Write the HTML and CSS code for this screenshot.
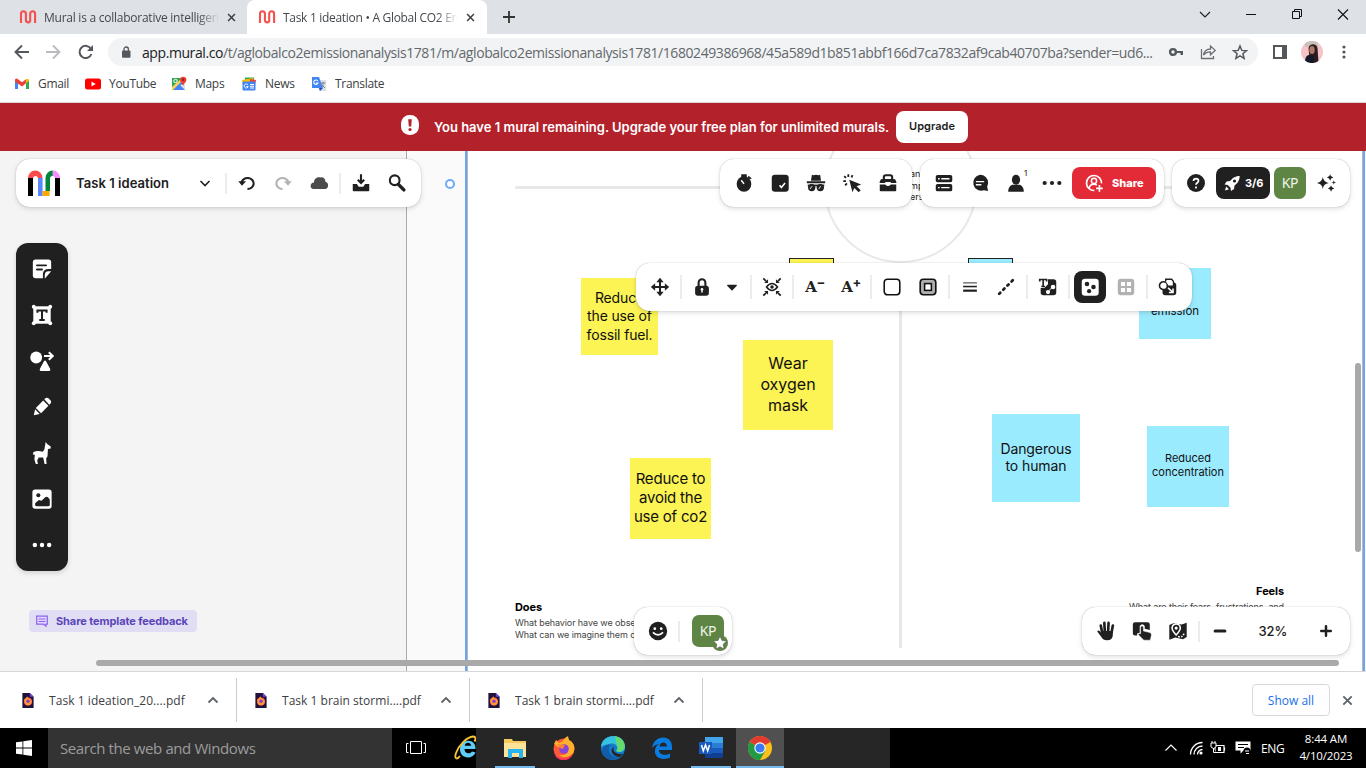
FILE: index.html
```html
<!DOCTYPE html>
<html lang="en">
<head>
<meta charset="utf-8">
<title>Task 1 ideation</title>
<link rel="stylesheet" href="styles.css">
</head>
<body>
<svg class="defs" aria-hidden="true">
  <symbol id="muralfav" viewBox="0 0 18 16"><path d="M2 14V4.800a2.450 2.600 0 0 1 4.900 0V10.500a2.400 2.600 0 0 0 4.500 1.500M11.200 12V4.800a2.450 2.600 0 0 1 4.900 0V14M6.900 4v8" fill="none" stroke="#f4514f" stroke-width="2.100"/></symbol>
  <symbol id="x" viewBox="0 0 10 10"><path d="M1.200 1.200l7.600 7.600M8.800 1.200L1.200 8.800" stroke="currentColor" stroke-width="1.700" fill="none"/></symbol>
  <symbol id="pdf" viewBox="0 0 12 16"><path d="M0 0h8l4 4v12H0z" fill="#20123a"/><path d="M8 0l4 4H8z" fill="#7542e5"/><circle cx="6" cy="9" r="4.300" fill="#ff4f5e"/><path d="M2 6c2 2 1-2 4-2-1 2 4 2 4 5a4 4 0 0 1-5 4c-3-1-3-4-3-7z" fill="#ff9a2e"/><circle cx="6" cy="8.800" r="1.800" fill="#8a3bd8"/></symbol>
  <symbol id="up" viewBox="0 0 12 8"><path d="M1.500 6.500L6 2l4.500 4.500" fill="none" stroke="#5f6368" stroke-width="1.800"/></symbol>
</svg>

<header class="tabs">
  <div class="tab">
    <svg class="fav"><use href="#muralfav"/></svg>
    <span class="tab-text t1">Mural is a collaborative intelligen</span>
    <svg class="close"><use href="#x"/></svg>
  </div>
  <div class="tab active">
    <svg class="fav"><use href="#muralfav"/></svg>
    <span class="tab-text t2">Task 1 ideation • A Global CO2 En</span>
    <svg class="close"><use href="#x"/></svg>
  </div>
  <svg class="newtab" viewBox="0 0 12 12"><path d="M6 0v12M0 6h12" stroke="#333" stroke-width="1.800"/></svg>
  <div class="win">
    <svg viewBox="0 0 46 30"><path d="M18 12l5 5 5-5" fill="none" stroke="#222" stroke-width="1.200"/></svg>
    <svg viewBox="0 0 46 30"><path d="M18 14.500h10" stroke="#111"/></svg>
    <svg viewBox="0 0 46 30"><path d="M18.500 11.500h7v7h-7zM20.500 11.500v-2h7v7h-2" fill="none" stroke="#111"/></svg>
    <svg viewBox="0 0 46 30"><path d="M18 9.500l10 10M28 9.500l-10 10" stroke="#111" stroke-width="1.100"/></svg>
  </div>
</header>

<nav class="bar">
  <svg class="nav-ic" viewBox="0 0 32 28"><path d="M29 14H16M22 7.500L15.500 14l6.500 6.500" fill="none" stroke="#54585d" stroke-width="1.900"/></svg>
  <svg class="nav-ic" viewBox="0 0 32 28"><path d="M14 14h13M21 7.500l6.500 6.500-6.500 6.500" fill="none" stroke="#b9bbbe" stroke-width="1.900"/></svg>
  <svg class="nav-ic" viewBox="0 0 32 28"><path d="M25 11a6.100 6.100 0 1 0 .4 5" fill="none" stroke="#54585d" stroke-width="2"/><path d="M27 7v6h-6z" fill="#54585d"/></svg>
  <div class="omni">
    <svg class="lock" viewBox="0 0 10 12"><rect x="1" y="4.500" width="8.500" height="7.200" rx="1" fill="#54585d"/><path d="M3 5V3.200a2.200 2.200 0 0 1 4.400 0V5" fill="none" stroke="#54585d" stroke-width="1.300"/></svg>
    <span class="url"><b>app.mural.co</b>/t/aglobalco2emissionanalysis1781/m/aglobalco2emissionanalysis1781/1680249386968/45a589d1b851abbf166d7ca7832af9cab40707ba?sender=ud6...</span>
    <svg class="omni-ic" viewBox="0 0 32 28"><circle cx="13" cy="14" r="2.900" fill="none" stroke="#54585d" stroke-width="2.400"/><path d="M16 13h7v4h-2.500v-2H16z" fill="#54585d"/></svg>
    <svg class="omni-ic" viewBox="0 0 32 28"><path d="M9.500 11v9.500h12V18" fill="none" stroke="#6b6f73" stroke-width="1.300"/><path d="M11.500 17c.8-4 3.500-6 7-6V8l4.700 4.400-4.700 4.300v-2.900c-3 0-5 .8-7 3.200z" fill="none" stroke="#6b6f73" stroke-width="1.300"/></svg>
    <svg class="omni-ic" viewBox="0 0 32 28"><path d="M16 8l1.800 4.400 4.700.3-3.600 3 1.200 4.700-4.100-2.600-4.100 2.600 1.200-4.700-3.600-3 4.700-.3z" fill="none" stroke="#54585d" stroke-width="1.500"/></svg>
  </div>
  <svg class="side" viewBox="0 0 14 14"><path d="M0 0h14v14H0zM2 2v10h7V2z" fill="#54585d" fill-rule="evenodd"/></svg>
  <svg class="ava" viewBox="0 0 22 22"><defs><clipPath id="ac"><circle cx="11" cy="11" r="11"/></clipPath></defs><g clip-path="url(#ac)"><path fill="#f6c3c6" d="M0 0h22v22H0z"/><path fill="#c9c0ba" d="M4 0h13v6H4z"/><path d="M7.500 7c1-5 8-5 9 0l1 15H9z" fill="#2b1c1f"/><ellipse cx="11" cy="9" rx="2.700" ry="4" fill="#b07a69"/><path d="M4 22c0-7 2-8 5-8l4 2v6z" fill="#16192a"/></g></svg>
  <svg class="kebab" viewBox="0 0 4 14"><g fill="#54585d"><circle cx="2" cy="2" r="1.600"/><circle cx="2" cy="7" r="1.600"/><circle cx="2" cy="12" r="1.600"/></g></svg>
</nav>

<nav class="marks">
  <a class="m-gmail"><svg viewBox="0 0 16 16"><path d="M1 4v9h3V7z" fill="#4285f4"/><path d="M15 4v9h-3V7z" fill="#34a853"/><path d="M1 3.500C2 2 3 2.500 4 3.300l4 3 4-3v4L8 10.500 1 5.500z" fill="#ea4335"/><path d="M12 3.300c1.500-1.300 3-.5 3 1.200L12 7.300z" fill="#fbbc04"/></svg><span>Gmail</span></a>
  <a class="m-yt"><svg viewBox="0 0 16 16"><rect y="2.500" width="16" height="11" rx="2.500" fill="#f00"/><path d="M6.500 5.500v5l4.200-2.500z" fill="#fff"/></svg><span>YouTube</span></a>
  <a class="m-maps"><svg viewBox="0 0 16 16"><path d="M1 2h11v12H1z" fill="#34a853"/><path d="M1 14L12 3l2 11z" fill="#4285f4"/><path d="M1 11L9 4l2 1-9 9H1z" fill="#fbd25a"/><path d="M9 9l5 5V8z" fill="#dfe3e8"/><circle cx="4.500" cy="5" r="1.700" fill="none" stroke="#fff"/><path d="M9 4a3.200 3.200 0 0 1 6.400 0c0 2.500-2.500 3-3.200 6-.7-3-3.200-3.500-3.200-6z" fill="#ea4335"/><circle cx="12.200" cy="3.800" r="1.200" fill="#8c1d18"/></svg><span>Maps</span></a>
  <a class="m-news"><svg viewBox="0 0 16 16"><path d="M4 1.500h9V6H4z" fill="#34a853"/><path d="M1 4l11-2 1 4-11 3z" fill="#fbbc04"/><path d="M9 3l6 1-1 5-5-1z" fill="#ea4335"/><rect x="1.500" y="5.500" width="13" height="9" rx="1" fill="#4285f4"/><path d="M7 9a2 2 0 1 0 .2 1.500H5.500M9 8.500h4M9 10.300h4M9 12h4" fill="none" stroke="#fff"/></svg><span>News</span></a>
  <a class="m-tr"><svg viewBox="0 0 16 16"><path d="M6 4h9v11H8z" fill="#dcdfe3"/><path d="M1 1h7l4 11H1z" fill="#4285f4"/><path d="M6.800 5a2.200 2.200 0 1 0 .2 2H5" fill="none" stroke="#fff" stroke-width="1.100"/><path d="M10 7h4.500M12.200 6v1c0 2-1 3.500-2 4.500M10.800 8.500l3 3.500" stroke="#7d8288" fill="none"/><path d="M8 12h4l-3 3z" fill="#1a4fc0"/></svg><span>Translate</span></a>
</nav>

<section class="banner">
  <svg viewBox="0 0 20 20"><rect x="1" width="18" height="20" rx="8.500" fill="#fff"/><path d="M8.200 4.300h3.600L11.200 11.500H8.800z" fill="#b3212b"/><circle cx="10" cy="14.500" r="1.600" fill="#b3212b"/></svg>
  <span class="banner-text">You have 1 mural remaining. Upgrade your free plan for unlimited murals.</span>
  <button class="upgrade">Upgrade</button>
</section>

<main class="canvas">
  <div class="margin-area"></div>
  <div class="handle"></div>
  <div class="paper"></div>
  <div class="hline"></div><div class="vline"></div><div class="ring"></div>
  <div class="peek">an<br>mp<br>ers</div>
  <div class="note y s1">Reduce<br>the use of<br>fossil fuel.</div>
  <div class="note y s2">Wear<br>oxygen<br>mask</div>
  <div class="note y s3">Reduce to<br>avoid the<br>use of co2</div>
  <div class="note b s4">emission</div>
  <div class="note b s5">Dangerous<br>to human</div>
  <div class="note b s6">Reduced<br>concentration</div>
  <div class="stub y k1"></div><div class="stub b k2"></div>
  <div class="label does"><b>Does</b><span>What behavior have we observed?</span><span>What can we imagine them doing?</span></div>
  <div class="label feels"><b>Feels</b><span>What are their fears, frustrations, and</span></div>
  <div class="hscroll"></div><div class="vscroll"></div>

  <div class="panel p-title">
    <svg class="logo" viewBox="0 0 32 26"><path d="M0 8h5v18H0zM27 8h5v18h-5z"/><path d="M0 8a7.200 7.500 0 0 1 14.500 0H10a2.600 2.600 0 0 0-5 0z" fill="#ff4b4b"/><path d="M10 8h4.600v18H10z" fill="#5887ff"/><path d="M14.600 21h7v5h-7z" fill="#ffa800"/><path d="M17.500 21V8A7.300 7.300 0 0 1 24.800.5V6A2.500 2.500 0 0 0 22 8v13z" fill="#00873c"/><path d="M24.800.5A7.300 7.300 0 0 1 32 8h-5c0-1-1-2-2.200-2z" fill="#f58cff"/></svg>
    <span class="name">Task 1 ideation</span>
    <svg class="i24" viewBox="0 0 24 24"><path d="M7.500 10l4.500 4.500 4.500-4.500" class="ln"/></svg>
    <i class="div d1"></i>
    <svg class="ic" viewBox="0 0 24 24"><path d="M6 11.500a6.700 6 0 1 1 6.500 7" class="ln2"/><path d="M2.500 10h8.500l-4.500 5z"/></svg>
    <svg class="ic dim" viewBox="0 0 24 24"><path d="M18 11.500A6.700 6 0 1 0 11.500 18.500" class="ln2"/><path d="M21.500 10H13l4.500 5z"/></svg>
    <svg class="ic" viewBox="0 0 24 24"><path d="M6 18.500c-4.500 0-4-7 .5-7 0-5 4.500-6.500 7.500-5.500 2-1 5 1 5 4.500 4 .5 4 8-.5 8z" fill="#4c4c4c"/></svg>
    <i class="div"></i>
    <svg class="ic" viewBox="0 0 24 24"><path d="M3 13h4.500l2 3h5l2-3H21v7q0 1-1 1H4q-1 0-1-1z"/><path d="M12 2.500v9M8.500 8.500L12 12l3.500-3.500" class="ln2"/></svg>
    <svg class="ic" viewBox="0 0 24 24"><circle cx="9.500" cy="9" r="5.300" class="ln2"/><path d="M13.500 13.500l6 6" stroke="#202020" stroke-width="3.800" stroke-linecap="round"/></svg>
  </div>

  <div class="panel p-fac">
    <svg class="ic" viewBox="0 0 24 24"><ellipse cx="12" cy="13" rx="8" ry="8.500"/><path d="M9 2.500h6V6H9zM17 4l3.500 3-2 1-2.500-2z"/><path d="M12 13L9 9" stroke="#fff" stroke-width="1.600"/></svg>
    <svg class="ic" viewBox="0 0 24 24"><rect x="3" y="3" width="18.500" height="18.500" rx="3.500"/><path d="M11.500 14.500l2 2.500 4-5" stroke="#fff" stroke-width="1.700" fill="none"/></svg>
    <svg class="ic" viewBox="0 0 24 24"><path d="M6.500 9.500l1-6.500q2 1 4.500 0 2.500 1 4.500 0l1 6.500zM2 10h20v2.200H2z"/><ellipse cx="7.300" cy="17" rx="4" ry="4"/><ellipse cx="16.700" cy="17" rx="4" ry="4"/><path d="M3 13.700h18v2H3z"/><path d="M5.500 18.500l2.200-3M15 18.500l2.200-3" stroke="#fff"/></svg>
    <svg class="ic" viewBox="0 0 24 24"><path d="M9 8.500l13 5-5 2 4.500 4.500-2.200 2.200-4.800-4.700-2 4.500z"/><path d="M8 2.500v3M3.500 4.500l2 2M2.500 10h3M12.500 3.500l-1 2.500M4.500 14.500l2-2" stroke="#202020" stroke-width="2"/></svg>
    <svg class="ic" viewBox="0 0 24 24"><path d="M7.500 8V5.500q0-2 2-2h5q2 0 2 2V8" class="ln2"/><path d="M5.500 7.500h13q2 0 2.800 4.500H15v-1.200H9V12H2.700q.8-4.500 2.800-4.500zM3 13.500h6q3 3.500 6 0h6V20q0 1-1 1H4q-1 0-1-1z"/></svg>
  </div>

  <div class="panel p-collab">
    <svg class="ic" viewBox="0 0 24 24"><rect x="3" y="3.300" width="18" height="8" rx="2"/><rect x="3" y="13" width="18" height="8" rx="2"/><path d="M9 7.300h9M9 17h9" stroke="#fff" stroke-width="1.500"/><path d="M5.500 7.300h1.800M5.500 17h1.800" stroke="#fff" stroke-width="1.500"/></svg>
    <svg class="ic" viewBox="0 0 24 24"><path d="M12 3a8.800 8.800 0 0 1 8.800 8.800q0 2-1 4l1 5-4.500-.8A8.800 8.800 0 1 1 12 3z"/><path d="M7.500 10.500h9M7.500 14h6" stroke="#fff" stroke-width="1.600"/></svg>
    <div class="people"><svg class="ic" viewBox="0 0 24 24"><ellipse cx="12" cy="8.500" rx="4.500" ry="5.500"/><path d="M3.500 21.500c0-5 3-7.500 5-7.500h7c2 0 5 2.500 5 7.500z"/></svg><sup>1</sup></div>
    <svg class="ic" viewBox="0 0 24 24"><circle cx="4" cy="12" r="2.300"/><circle cx="12" cy="12" r="2.300"/><circle cx="20" cy="12" r="2.300"/></svg>
    <button class="share"><svg viewBox="0 0 24 24"><path d="M12.500 21A9 9 0 1 1 21 12.500" fill="none" stroke="#fff" stroke-width="2"/><circle cx="12" cy="9.500" r="3.100" fill="none" stroke="#fff" stroke-width="1.800"/><path d="M6 19c.5-4.500 3-5.500 6-5.500q2 0 3.500 1" fill="none" stroke="#fff" stroke-width="1.900"/><path d="M18.500 14.500v8M14.500 18.500h8" stroke="#fff" stroke-width="2"/></svg><span>Share</span></button>
  </div>

  <div class="panel p-user">
    <svg class="ic" viewBox="0 0 24 24"><circle cx="12" cy="12" r="9.800"/><path d="M9.300 9.800c0-3.500 5.400-3.500 5.400 0 0 2-2.700 2-2.700 4.200M12 15.700v2.200" fill="none" stroke="#fff" stroke-width="1.900"/></svg>
    <button class="rocket"><svg viewBox="0 0 24 24"><path d="M21 3c-6 0-9.500 3-12 6.500l-4.500.5L2 14l4 .5 3.500 3.500.5 4 4-2.500.5-4.500c3.500-2.500 6.500-6 6.500-12z" fill="#fff"/><circle cx="14.500" cy="9.500" r="2" fill="#202020"/><path d="M2.500 21.500l1.500-5 3.500 3.500z" fill="#fff"/></svg><span>3/6</span></button>
    <div class="kp">KP</div>
    <svg class="ic" viewBox="0 0 24 24"><path d="M8.500 5.500q.8 5.700 6.500 6.500-5.700.8-6.500 6.500Q7.700 12.800 2 12q5.700-.8 6.500-6.500zM16.500 2.500q.4 3.100 3.500 3.500-3.100.4-3.500 3.500-.4-3.100-3.500-3.500 3.100-.4 3.500-3.500zM17.500 14.500q.4 3.100 3.500 3.500-3.100.4-3.500 3.500-.4-3.100-3.500-3.500 3.100-.4 3.500-3.500zM20.500 9l.6 1.900 1.900.6-1.900.6-.6 1.900-.6-1.900-1.900-.6 1.900-.6z"/></svg>
  </div>

  <div class="panel p-ctx">
    <svg class="ic" viewBox="0 0 24 24"><path d="M12 5v14M5 12h14" stroke="#202020" stroke-width="2.200"/><path d="M12 2l4 4.700H8zM12 22l4-4.700H8zM2 12l4.700-4v8zM22 12l-4.700-4v8z"/></svg>
    <i class="div"></i>
    <svg class="ic" viewBox="0 0 24 24"><rect x="4.500" y="10.500" width="15" height="11" rx="3"/><path d="M8.300 11V7.500a3.700 4 0 0 1 7.400 0V11" class="ln2"/><path d="M12 14v4" stroke="#fff" stroke-width="1.600"/><circle cx="12" cy="14.500" r="1.400" fill="#fff"/></svg>
    <svg class="ic caret" viewBox="0 0 24 24"><path d="M7 9.500h10q.8.300 0 1.500l-5 5-5-5q-.8-1.200 0-1.500z"/></svg>
    <i class="div"></i>
    <svg class="ic" viewBox="0 0 24 24"><path d="M6 12q6-7.500 12 0-6 7.500-12 0z" fill="none" stroke="#202020" stroke-width="1.700"/><circle cx="12" cy="12" r="1.900"/><path d="M2.500 2.500l3 3M21.500 2.500l-3 3M2.500 21.500l3-3M21.500 21.500l-3-3" stroke="#202020" stroke-width="1.900"/><path d="M7.700 3.500v4.200H3.500zM16.300 3.500v4.200h4.200zM7.700 20.500v-4.200H3.500zM16.300 20.500v-4.200h4.200z"/></svg>
    <i class="div"></i>
    <span class="ic glyph">A<sup>−</sup></span>
    <span class="ic glyph">A<sup>+</sup></span>
    <i class="div"></i>
    <svg class="ic" viewBox="0 0 24 24"><rect x="3.500" y="3.500" width="17" height="17" rx="3.500" fill="none" stroke="#111" stroke-width="1.700"/></svg>
    <svg class="ic" viewBox="0 0 24 24"><rect x="3.500" y="3.500" width="17" height="17" rx="3.500" fill="#b0b0b0" stroke="#111" stroke-width="1.800"/><rect x="8.300" y="8.300" width="7.400" height="7.400" fill="#fff" stroke="#111" stroke-width="1.700"/></svg>
    <i class="div"></i>
    <svg class="ic" viewBox="0 0 24 24"><path d="M4.500 7.500h15" stroke="#202020"/><path d="M4.500 11.500h15" stroke="#202020" stroke-width="1.700"/><path d="M4.500 16h15" stroke="#202020" stroke-width="2.400"/></svg>
    <svg class="ic" viewBox="0 0 24 24"><path d="M4.500 19.500L19.500 4.500" stroke="#202020" stroke-width="3" stroke-linecap="round" stroke-dasharray="1.800 4.600"/></svg>
    <i class="div"></i>
    <svg class="ic" viewBox="0 0 24 24"><path d="M12 3.500h6q3 0 3 3V18q0 3-3 3H7q-3 0-3-3v-5h4l4-4z"/><path d="M3 6V3.800h7.500V6M6.700 4v7.500M4.700 11.500h4" stroke="#202020" stroke-width="1.800" fill="none"/><circle cx="17.500" cy="12" r="2.500" fill="#fff"/><circle cx="12" cy="17.500" r="2.300" fill="#fff"/><path d="M12 17l5-5" stroke="#fff"/></svg>
    <i class="div"></i>
    <span class="ic on"><svg viewBox="0 0 24 24"><rect x="3" y="3" width="18.500" height="18.500" rx="3.500" fill="#fff"/><circle cx="8.700" cy="8.700" r="2.500"/><circle cx="15.800" cy="12" r="2.500"/><circle cx="11" cy="16.500" r="2.300"/></svg></span>
    <svg class="ic" viewBox="0 0 24 24"><rect x="3" y="3" width="18" height="18" rx="3.500" fill="#b2b2b2"/><path d="M6.500 6.500h4.500V11H6.500zM13 6.500h4.500V11H13zM6.500 13H11v4.500H6.500zM13 13h4.500v4.500H13z" fill="#fff"/></svg>
    <i class="div"></i>
    <svg class="ic" viewBox="0 0 24 24"><path d="M9 4h6v3h3q3 0 3 3v8q0 3-3 3H9q-3 0-3-3v-5z"/><circle cx="7" cy="10.500" r="4.300" fill="#fff" stroke="#202020" stroke-width="1.700"/><path d="M9.500 6V3.500H16L18 6v5h-5" fill="#fff" stroke="#202020" stroke-width="1.500"/><path d="M12 13l5 4.500M17.500 13.500v4.500H13" stroke="#fff" stroke-width="1.700" fill="none"/></svg>
  </div>

  <div class="tools">
    <svg viewBox="0 0 24 24"><path d="M5 1.500h14q3 0 3 3V12h-3q-6 0-6 6v4H5q-3 0-3-3V4.500q0-3 3-3z"/><path d="M15 22.500V19q0-4.500 4-4.500h3z"/><path d="M6.500 8h10M6.500 12.500h5.500" stroke="#202020" stroke-width="2" stroke-linecap="round"/></svg>
    <svg viewBox="0 0 24 24"><path d="M2.500 2.500h19v19h-19z"/><path d="M7 9.500V7h10v2.500M12 7v10M9 17.500h6" stroke="#202020" stroke-width="2.200" fill="none"/><circle cx="3" cy="3" r="2.100"/><circle cx="21" cy="3" r="2.100"/><circle cx="3" cy="21" r="2.100"/><circle cx="21" cy="21" r="2.100"/></svg>
    <svg class="wide" viewBox="0 0 24 24"><circle cx="6.200" cy="8.500" r="5.900"/><path d="M9.800 20l4-7.500q1.200-2 2.400 0l4 7.500q.5 2-1 2h-8.400q-1.500 0-1-2z"/><path d="M14 7h8M18.800 3.300l4 3.700-4 3.700" stroke="#fff" stroke-width="2.100" fill="none"/></svg>
    <svg viewBox="0 0 24 24"><path d="M14.500 3.500l2-1.500q1.500-.5 2.500.5L21.500 5q1 1.500 0 3L20 9.500zM13.300 5l5.700 5.700-8 8-5.700-5.700zM4.500 14.500l5 5L3 21z"/></svg>
    <svg viewBox="0 0 24 24"><path d="M15.500 3L16 0l2 2.500L21.500 5v2l-3 .5-.5 8-1.500 2.500.5 6h-2.200l-1-5-.6-2H8.500l-1.700 3 .7 4H5.200l-1.500-5 .5-5-2.200-.3.700-2.700q4-2 10-.5l1.800-2z"/></svg>
    <svg viewBox="0 0 24 24"><rect x="1.500" y="1.500" width="21" height="21" rx="3"/><circle cx="8" cy="8" r="2.200" fill="#202020"/><path d="M4.500 18.500v-2l4-3.500 3 1 4-4q1.500-1 3 0l2 2.500v6q0 1.500-2 1.500h-12q-2 0-2-1.500z" fill="#202020"/></svg>
    <svg viewBox="0 0 24 24"><circle cx="4.200" cy="12" r="2.400"/><circle cx="12" cy="12" r="2.400"/><circle cx="19.800" cy="12" r="2.400"/></svg>
  </div>

  <div class="feedback"><svg viewBox="0 0 12 12"><path d="M.7 1.200h10.600v8H10v2l-2.500-2H.7z" fill="#e3d8ff" stroke="#8a63f0" stroke-width="1.200"/><path d="M2.500 4h7M2.500 6.500h7" stroke="#8a63f0"/></svg><span>Share template feedback</span></div>

  <div class="panel p-react">
    <svg class="ic" viewBox="0 0 24 24"><circle cx="12" cy="12" r="10"/><circle cx="8.500" cy="9.500" r="1.500" fill="#fff"/><circle cx="15.500" cy="9.500" r="1.500" fill="#fff"/><path d="M6.500 13.500q5.500 5.500 11 0" fill="none" stroke="#fff" stroke-width="1.900"/></svg>
    <i class="div"></i>
    <div class="kp">KP<svg class="badge" viewBox="0 0 16 16"><circle cx="8" cy="8" r="8" fill="#5f8545"/><path d="M8 1.200l2 4.300 4.600.6-3.400 3.200.9 4.700L8 11.700 3.900 14l.9-4.700L1.400 6.100 6 5.500z" fill="#fff" stroke="#444" stroke-width=".5"/></svg></div>
  </div>

  <div class="panel p-zoom">
    <svg class="ic" viewBox="0 0 24 24"><path d="M7.800 14L6.300 6M10.700 13l-.5-9.800M14.300 13l.5-9.800M18 14l1.500-8" stroke="#202020" stroke-width="2.900" stroke-linecap="round"/><path d="M6.400 12h13v4.500q0 5.500-6.500 5.500-4 0-6-3.500L2.500 12.500q1-2 2.800-.3l1.500 1.600z"/></svg>
    <svg class="ic" viewBox="0 0 24 24"><path d="M4.500 2.500H18q2.500 0 2.500 2.500v6L15 9.500V6.500q-2.800-3.500-5.500 0V14l-2.500.5L6.500 17H4.500Q2 17 2 14.500V5q0-2.500 2.500-2.500z"/><path d="M10.500 7.500q1.700-2 3 0v4.500l7 1.700q2.200.6 1.700 3.300l-1.200 5H14l-6-6q.5-2 2.500-1z" stroke="#fff" stroke-width=".5"/></svg>
    <svg class="ic" viewBox="0 0 24 24"><path d="M2.500 5.500L7 3.500 16 5l5.500-2V18.500L17.500 21 9 19l-6.500 2.500z"/><path d="M5.500 8.800a4.500 4.500 0 0 1 9 0q0 2.700-4.500 7.500-4.500-4.800-4.500-7.500z" fill="#202020" stroke="#fff" stroke-width="1.700"/><circle cx="10" cy="8.800" r="1.700" fill="#fff"/><path d="M12 18q6 1.500 6.500-4" stroke="#fff" stroke-width="1.700" stroke-dasharray="1.700 1.500" fill="none"/></svg>
    <i class="div"></i>
    <svg class="ic" viewBox="0 0 24 24"><path d="M6.700 12h10.600" stroke="#202020" stroke-width="3.300" stroke-linecap="round"/></svg>
    <span class="pct">32%</span>
    <svg class="ic" viewBox="0 0 24 24"><path d="M6.800 12h10.400M12 6.800v10.400" stroke="#202020" stroke-width="2.700" stroke-linecap="round"/></svg>
  </div>
</main>

<section class="downloads">
  <div class="dl"><svg class="pdf"><use href="#pdf"/></svg><span class="f1">Task 1 ideation_20....pdf</span><svg class="up"><use href="#up"/></svg></div>
  <div class="dl"><svg class="pdf"><use href="#pdf"/></svg><span class="f2">Task 1 brain stormi....pdf</span><svg class="up"><use href="#up"/></svg></div>
  <div class="dl"><svg class="pdf"><use href="#pdf"/></svg><span class="f2">Task 1 brain stormi....pdf</span><svg class="up"><use href="#up"/></svg></div>
  <button class="showall">Show all</button>
  <svg class="dlx"><use href="#x"/></svg>
</section>

<footer class="task">
  <div class="start"><svg viewBox="0 0 16 16"><path d="M0 2.300L6.500 1.400v6.100H0zM7.300 1.300L16 0v7.500H7.300zM0 8.400h6.500v6.200L0 13.700zM7.300 8.400H16V16l-8.700-1.300z" fill="#fff"/></svg></div>
  <div class="search"><span>Search the web and Windows</span></div>
  <svg class="tv" viewBox="0 0 48 40"><path d="M18.500 13.500h11v12h-11zM16.500 15.500h-2v9h2M31.500 15.500h2v9h-2" fill="none" stroke="#fff"/></svg>
  <svg class="ie" viewBox="-2 0 36 40"><path d="M33.500 21H22.500c0 5 5.500 5.500 7.500 2.500l3.500 1c-2 5.500-9 6-12.500 3.500-4.500-3.500-4-12 1.500-14.500 6-2.500 11.500 1 11 7.500zM22.700 17.700h6.500c-.5-4-6-4-6.500 0z" fill="#5fcdf8"/><path d="M18 28c-3 4-6 3-4-3C17 17 25 9 31 8.500c3 0 3 2.500 1.500 5" fill="none" stroke="#f6c433" stroke-width="1.900"/></svg>
  <div class="apps">
    <div class="app a-ex run"><svg viewBox="0 0 24 24"><path d="M1 3h8l1 2h13v16H1z" fill="#f5c95c"/><path d="M1 7h22v14H1z" fill="#fde29a"/><path d="M5 13h15v9h-4v-5h-7v5H5z" fill="#28b4ef"/></svg></div>
    <div class="app"><svg viewBox="0 0 24 24"><circle cx="12" cy="13" r="10.500" fill="#ff5a36"/><path d="M2 8l2-4 3 3 3-1 3-4 3-2 1 4c5 3 7 8 4 13-3 5-11 5-14 2 8 1 9-3 9-5L6 11z" fill="#ffb12c"/><path d="M2 14c1 10 14 12 19 3-2 7-8 8-12 7-4-1-7-4-7-10z" fill="#f72c66"/><circle cx="12" cy="13" r="4.800" fill="#8744dd"/><path d="M5 8l8 1-2 4-3-1z" fill="#ff812f"/></svg></div>
    <div class="app"><svg viewBox="0 0 24 24"><circle cx="12" cy="12" r="12" fill="#1479c9"/><path d="M0 11C1-3 24-4 24 11c0 5-5 6-9 4 4-5-2-9-7-7-4 1-7 2-8 3z" fill="#35c1e0"/><path d="M14 0c12 3 12 15 4 16l-3-1q3-2 1-5z" fill="#63da6b"/><path d="M9 9c-4 8 3 14 11 12-7 5-17 3-19-5 0-5 4-8 8-7z" fill="#125ca9"/><path d="M13 11c-2 4 2 8 9 7l-3 3c-8 0-11-8-6-10z" fill="#262626"/></svg></div>
    <div class="app"><svg viewBox="0 0 24 24"><path d="M2 12C3 5 8 1.500 13 1.500c6 0 9 4 9 9.500v3H9c0 5 7 6 11 3.500v4C12 25 4 22 5 14c.5-3 2-5 4-6-4 .5-6 2.500-7 4zM9.500 10.500H17C17 5 10 5 9.500 10.500z" fill="#0a7be0"/></svg></div>
    <div class="app a-w run"><svg viewBox="0 0 24 24"><path d="M6 1h18v6H6z" fill="#41a5ee"/><path d="M6 7h18v5H6z" fill="#2b7cd3"/><path d="M6 12h18v5H6z" fill="#185abd"/><path d="M6 17h18v5H6z" fill="#103f91"/><path d="M0 6h13v12H0z" fill="#185abd"/><path d="M2.500 9l1.800 6L6.500 9l2.200 6 1.800-6" stroke="#fff" stroke-width="1.500" fill="none"/></svg></div>
    <div class="app chrome"><svg viewBox="0 0 24 24"><circle cx="12" cy="12" r="12" fill="#fbc116"/><path d="M12 12L1.600 6A12 12 0 0 1 22.400 6z" fill="#e33b2e"/><path d="M1.600 6a12 12 0 0 0 10.400 18L17.200 15 12 12z" fill="#229a45"/><circle cx="12" cy="12" r="5.700" fill="#fff"/><circle cx="12" cy="12" r="4.600" fill="#3a7af0"/></svg></div>
  </div>
  <div class="tray">
    <svg class="tc" viewBox="0 0 12 8"><path d="M.5 6.500L6 1l5.500 5.500" stroke="#fff" stroke-width="1.200" fill="none"/></svg>
    <svg class="tw" viewBox="0 0 14 14"><path d="M1.500 13.500a12 12 0 0 1 12-12M5 13.500a8.500 8.500 0 0 1 8.500-8.500M8.500 13.500a5 5 0 0 1 5-5" stroke="#fff" fill="none" stroke-width="1.300"/><circle cx="12" cy="12" r="1.600" fill="#fff"/></svg>
    <svg class="tb" viewBox="0 0 16 14"><path d="M5 4.500h9v7H5zM14.500 6.500v3" stroke="#fff" fill="none" stroke-width="1.200"/><path d="M1 2h5v4q-2.500 3-5 0zM2 0v2M5 0v2M3.500 7v4.500H6" stroke="#fff" fill="#000"/><path d="M8 6h3v4H8z" fill="#fff"/></svg>
    <svg class="tn" viewBox="0 0 16 14"><path d="M.5.500h15v9H8.500l-3 3v-3h-5z" fill="#fff"/><path d="M3 3.500h10M3 6.500h6" stroke="#000"/><circle cx="12" cy="10" r="3.500" fill="#000"/><path d="M10 10h4M11 12.500h3" stroke="#fff"/></svg>
    <span class="eng">ENG</span>
    <span class="clock"><span class="c1">8:44 AM</span><span class="c2">4/10/2023</span></span>
  </div>
</footer>
</body>
</html>
```
FILE: styles.css
```css
* { box-sizing: border-box; }
body { margin: 0; width: 1366px; height: 768px; overflow: hidden; display: flex; flex-direction: column; font: 12px "Open Sans", "Noto Sans", sans-serif; color: #3c4043; background: #fff; white-space: nowrap; }
button { border: 0; padding: 0; font: inherit; }
svg { display: block; flex: none; }
.defs { position: absolute; width: 0; height: 0; }

/* browser tabs */
.tabs { height: 34px; flex: none; background: #dee1e6; display: flex; align-items: center; }
.tab { width: 247px; height: 34px; padding-left: 19px; display: flex; align-items: center; }
.tab.active { width: 240px; padding-left: 11px; background: #fff; border-radius: 8px 8px 0 0; }
.fav { width: 18px; height: 16px; }
.tab-text { width: 175px; margin-left: 7px; color: #45494d; -webkit-mask-image: linear-gradient(90deg, #000 88%, transparent); mask-image: linear-gradient(90deg, #000 88%, transparent); }
.t1 { letter-spacing: -.25px; }
.t2 { letter-spacing: -.3px; }
.close { width: 9px; height: 9px; margin-left: 8px; color: #3c4043; }
.newtab { width: 12px; height: 12px; margin-left: 16px; }
.win { margin-left: auto; display: flex; height: 30px; align-self: flex-start; }
.win svg { width: 46px; height: 30px; }

/* address bar */
.bar { height: 36px; flex: none; display: flex; align-items: center; }
.nav-ic { width: 32px; height: 28px; }
.nav-ic:nth-child(3) { width: 32px; margin-left: 2px; }
.omni { width: 1150px; height: 28px; margin-left: 10px; padding-left: 13px; border-radius: 14px; background: #f1f3f4; display: flex; align-items: center; }
.lock { width: 10px; height: 12px; }
.url { width: 1021px; margin-left: 11px; font-size: 14px; letter-spacing: -.42px; color: #64686c; }
.url b { font-weight: 400; color: #202124; }
.omni-ic { width: 32px; height: 28px; margin-left: -3px; }
.omni-ic + .omni-ic { margin-left: 0; }
.side { width: 14px; height: 14px; margin-left: 15px; }
.ava { width: 22px; height: 22px; margin-left: 14px; }
.kebab { width: 4px; height: 14px; margin-left: 19px; }

/* bookmarks */
.marks { height: 33px; flex: none; padding: 0 0 5px 14px; display: flex; align-items: center; border-bottom: 1px solid #d8d8da; }
.marks a { display: flex; align-items: center; gap: 8px; letter-spacing: -.3px; }
.marks svg { width: 16px; height: 16px; }
.m-gmail { width: 71px; }
.m-yt { width: 86px; }
.m-maps { width: 70px; }
.m-news { width: 70px; }

/* upgrade banner */
.banner { height: 48px; flex: none; padding-left: 400px; background: #b3212b; display: flex; align-items: center; color: #fff; font-family: Inter, sans-serif; font-weight: 600; }
.banner svg { width: 20px; height: 20px; margin-bottom: 4px; }
.banner-text { width: 454px; margin-left: 14px; font-size: 13px; }
.upgrade { width: 72px; height: 32px; margin-left: 8px; padding-bottom: 2px; border-radius: 8px; background: #fff; color: #1c1c1c; font-size: 11px; }

/* mural canvas */
.canvas { position: relative; height: 520px; flex: none; overflow: hidden; background: #f4f4f4; font-family: Inter, Roboto, sans-serif; color: #202020; }
.canvas > * { position: absolute; }
.margin-area { left: 406px; top: 0; width: 960px; height: 520px; background: #fafafa; border-left: 1px solid #aaa; }
.handle { left: 445px; top: 28px; width: 10px; height: 10px; border: 2px solid #6fa8f7; border-radius: 50%; background: #fff; }
.paper { left: 465px; top: 0; width: 900px; height: 520px; background: #fff; border: solid #6aa5f5; border-width: 0 2px; box-shadow: inset 1px 0 #b8b8b8, inset -1px 0 #b8b8b8; }
.hline { left: 515px; top: 35px; width: 769px; height: 3px; background: #e8e8e8; }
.vline { left: 899px; top: 111px; width: 3px; height: 386px; background: #e8e8e8; }
.ring { left: 824px; top: -41px; width: 153px; height: 153px; border: 2px solid #e8e8e8; border-radius: 50%; background: #fff; }
.peek { left: 910px; top: 17px; font-size: 9px; line-height: 11.500px; }
.note { display: flex; align-items: center; justify-content: center; text-align: center; color: #111; }
.y { background: #fcf354; }
.b { background: #9bebff; }
.s1 { left: 581px; top: 127px; width: 77px; height: 77px; font-size: 14px; line-height: 18.500px; letter-spacing: -.15px; }
.s2 { left: 743px; top: 189px; width: 90px; height: 90px; font-size: 16px; line-height: 21px; padding-bottom: 2px; }
.s3 { left: 630px; top: 307px; width: 81px; height: 81px; font-size: 15px; line-height: 19px; letter-spacing: -.2px; padding-bottom: 2px; }
.s4 { left: 1139px; top: 117px; width: 72px; height: 71px; font-size: 11.500px; padding-top: 15px; }
.s5 { left: 992px; top: 263px; width: 88px; height: 88px; font-size: 14px; line-height: 17px; letter-spacing: -.1px; padding-bottom: 2px; }
.s6 { left: 1147px; top: 274.500px; width: 82px; height: 81.500px; font-size: 11px; line-height: 14px; padding-bottom: 2px; }
.stub { top: 107px; width: 45px; height: 40px; border: 1px solid #222; }
.k1 { left: 789px; }
.k2 { left: 968px; }
.label { display: flex; flex-direction: column; font-size: 9px; line-height: 12px; letter-spacing: -.1px; color: #444; }
.label b { font-size: 11px; line-height: 14px; margin-bottom: 3px; color: #000; letter-spacing: -.1px; }
.does { left: 515px; top: 449px; }
.feels { right: 82px; top: 433px; align-items: flex-end; }
.hscroll { left: 96px; top: 509px; width: 1243px; height: 6px; border-radius: 3px; background: #a9a9a9; }
.vscroll { left: 1355px; top: 212px; width: 6px; height: 189px; border-radius: 3px; background: #a9a9a9; }

/* floating toolbars */
.panel { height: 48px; padding: 0 6px; display: flex; align-items: center; background: #fff; border-radius: 14px; box-shadow: 0 0 1px rgba(0,0,0,.35), 0 2px 5px rgba(0,0,0,.13); }
.ic { width: 36px; height: 22px; flex: none; fill: #202020; }
.i24 { width: 24px; height: 24px; }
.ln { fill: none; stroke: #202020; stroke-width: 1.600; }
.ln2 { fill: none; stroke: #202020; stroke-width: 2.300; }
.dim { fill: #b2b2b2; }
.dim .ln2 { stroke: #b2b2b2; }
.div { width: 2px; height: 21px; margin: 0 2px; flex: none; background: #ececec; }
.p-title { left: 16px; top: 8px; width: 405px; padding-left: 12px; }
.logo { width: 32px; height: 26px; }
.name { width: 117px; margin-left: 16px; font-size: 13px; font-weight: 600; letter-spacing: .05px; }
.d1 { margin: 0 2px 0 8px; }
.p-fac { left: 720px; top: 8px; width: 192px; }
.p-collab { left: 920px; top: 8px; width: 244px; }
.people { position: relative; }
.people sup { position: absolute; left: 26px; top: -3px; font-size: 8px; line-height: 8px; }
.share { width: 84px; height: 32px; margin-left: 2px; border-radius: 8px; background: #e22b36; color: #fff; display: flex; align-items: center; padding: 0 0 1px 12px; gap: 8px; font-size: 11px; font-weight: 800; }
.share svg { width: 20px; height: 22px; }
.p-user { left: 1172px; top: 8px; width: 178px; }
.rocket { width: 54px; height: 32px; margin: 0 4px 0 2px; padding: 0 0 1px 7px; border-radius: 8px; background: #202020; color: #fff; display: flex; align-items: center; gap: 3px; font-size: 11px; font-weight: 700; }
.rocket svg { width: 19px; height: 20px; }
.kp { position: relative; width: 32px; height: 32px; margin-right: 2px; padding-bottom: 1px; border-radius: 7px; background: #5f8545; color: #f0f5ec; display: flex; align-items: center; justify-content: center; font: 14px "Noto Sans", sans-serif; letter-spacing: -.3px; }
.p-ctx { left: 636px; top: 112px; width: 556px; }
.caret { width: 28px; }
.p-ctx .caret { padding-right: 4px; }
.p-ctx .caret + .div { margin-left: 2px; }
.glyph { position: relative; display: flex; justify-content: center; padding-left: 2px; font: 700 15px/22px "DejaVu Serif", serif; letter-spacing: -.5px; }
.glyph sup { font: 700 13px/14px Inter, sans-serif; margin-top: -1px; }
.on { display: flex; justify-content: center; align-items: center; width: 32px; height: 32px; margin: 0 2px; border-radius: 8px; background: #202020; }
.on svg { width: 22px; height: 22px; }
.p-ctx .div { height: 24px; }
.tools { left: 16px; top: 92px; width: 52px; height: 328px; padding: 3px 0; display: flex; flex-direction: column; align-items: center; background: #202020; border-radius: 12px; box-shadow: 0 2px 5px rgba(0,0,0,.15); }
.tools svg { height: 46px; width: 22px; fill: #fff; }
.tools .wide { width: 24px; }
.feedback { left: 29px; top: 459px; width: 168px; height: 22px; padding-left: 7px; display: flex; align-items: center; gap: 8px; border-radius: 4px; background: #e1ddf4; color: #5a45b8; font-size: 11px; font-weight: 700; letter-spacing: -.1px; }
.feedback svg { width: 12px; height: 12px; }
.p-react { left: 634px; top: 456px; width: 98px; }
.p-react .kp { margin-left: 10px; }
.badge { position: absolute; left: 20px; top: 20px; width: 16px; height: 16px; }
.p-zoom { left: 1082px; top: 456px; width: 268px; }
.pct { width: 70px; text-align: center; font-size: 13px; font-weight: 500; }

/* downloads shelf */
.downloads { height: 57px; flex: none; display: flex; align-items: center; border-top: 1px solid #d5d7da; }
.dl { width: 233px; height: 44px; padding-left: 18px; display: flex; align-items: center; border-right: 1px solid #c9cbcd; }
.dl:first-child { width: 237px; padding-left: 22px; }
.pdf { width: 12px; height: 15px; }
.dl span { width: 137px; margin-left: 15px; }
.f1 { letter-spacing: .06px; }
.f2 { letter-spacing: .02px; }
.up { width: 12px; height: 8px; margin-left: 21px; }
.showall { width: 78px; height: 32px; margin-left: 549px; border: 1px solid #d6d9dc; border-radius: 4px; background: #fff; color: #1a6fe8; }
.dlx { width: 11px; height: 11px; margin-left: 12px; color: #5f6368; }

/* taskbar */
.task { height: 40px; flex: none; display: flex; background: #000; color: #fff; }
.start { width: 48px; display: flex; align-items: center; justify-content: center; }
.start svg { width: 16px; height: 16px; }
.search { width: 344px; padding-left: 12px; display: flex; align-items: center; background: #333; color: #9c9c9c; font-size: 15px; letter-spacing: -.4px; }
.tv { width: 48px; height: 40px; }
.ie { width: 36px; height: 40px; }
.apps { width: 414px; display: flex; padding-left: 15px; background: #262626; }
.app { width: 49px; height: 40px; display: flex; align-items: center; justify-content: center; }
.app svg { width: 24px; height: 24px; }
.run { width: 40px; margin: 0 4px; box-shadow: inset 0 -2px #76b9ed; }
.a-w { margin-left: 5px; }
.chrome { width: 48px; margin-left: 1px; background: #505050; box-shadow: inset 0 -2px #76b9ed; }
.tray { margin-left: auto; width: 201px; display: flex; align-items: center; }
.tc { width: 12px; height: 8px; }
.tw { width: 14px; height: 14px; margin-left: 12px; }
.tb { width: 16px; height: 14px; margin-left: 7px; }
.tn { width: 16px; height: 14px; margin-left: 9px; }
.eng { width: 24px; margin-left: 10px; letter-spacing: -.4px; }
.clock { width: 62px; margin: 0 0 3px 10px; display: flex; flex-direction: column; align-items: center; line-height: 17px; font-size: 11.500px; letter-spacing: -.15px; }
.a-ex { margin-left: 4px; }
```
